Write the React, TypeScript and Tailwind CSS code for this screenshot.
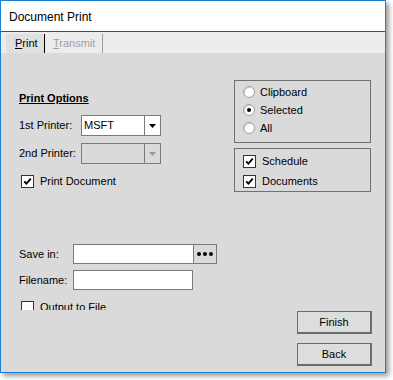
import React from "react";

const font = { fontFamily: '"Liberation Sans", Arial, sans-serif' };

function CheckBox({ checked, label }: { checked?: boolean; label: string }) {
  return (
    <div className="flex items-center h-[13px] gap-[6px]">
      <div className="w-[13px] h-[13px] shrink-0 border border-[#333] bg-white flex items-center justify-center">
        {checked && (
          <svg width="9" height="9" viewBox="0 0 9 9">
            <path d="M1.2 4.3 L3.4 6.6 L7.8 1.6" fill="none" stroke="#000" strokeWidth="1.9" />
          </svg>
        )}
      </div>
      <span className="leading-[13px]">{label}</span>
    </div>
  );
}

function Radio({ selected, label }: { selected?: boolean; label: string }) {
  return (
    <div className="flex items-center h-[18px] gap-[5px]">
      <div className="w-[12px] h-[12px] rounded-full border border-[#a0a0a0] bg-white flex items-center justify-center shadow-[inset_1px_1px_0_#d0d0d0]">
        {selected && <div className="w-[4px] h-[4px] rounded-full bg-black" />}
      </div>
      <span>{label}</span>
    </div>
  );
}

function Combo({ value, disabled }: { value?: string; disabled?: boolean }) {
  return (
    <div
      className={`flex h-[21px] w-[80px] border border-[#7a7a7a] ${disabled ? "bg-[#dadada]" : "bg-white"}`}
    >
      <div className="flex-1 pl-[2px] flex items-center">{value}</div>
      <div className="w-[16px] border-l border-[#7a7a7a] flex items-center justify-center">
        <svg width="7" height="4" viewBox="0 0 7 4">
          <path d="M0 0 H7 L3.5 4 Z" fill={disabled ? "#9a9a9a" : "#000"} />
        </svg>
      </div>
    </div>
  );
}

function Button({ label }: { label: string }) {
  return (
    <div className="w-[75px] h-[23px] border-t border-l border-r-2 border-b-2 border-[#6c6c6c] bg-[#dddddd] flex items-center justify-center">
      {label}
    </div>
  );
}

export default function App() {
  return (
    <div className="w-[393px] h-[380px] bg-white text-[11px] text-black" style={font}>
      <div className="w-[386px] h-[373px] border border-[#1a7fd4] flex flex-col shadow-[3px_3px_5px_rgba(0,0,0,0.4)]">
        {/* title bar */}
        <div className="h-[30px] bg-white flex items-center pl-[8px] text-[12px] pt-[2px]">Document Print</div>
        <div className="h-px bg-[#4d4d4d]" />

        {/* tabs */}
        <div className="h-[21px] bg-[#ececec] flex items-end pl-[5px]">
          <div className="h-[19px] w-[38px] bg-[#e0e0e0] flex items-center pl-[9px]">
            <span>
              <span className="underline">P</span>rint
            </span>
          </div>
          <div className="w-px h-[19px] bg-black" />
          <div className="h-[19px] flex items-center pl-[8px] text-[#a0a0a0]">
            <span>
              <span className="underline">T</span>ransmit
            </span>
          </div>
          <div className="w-px h-[19px] bg-[#a0a0a0] ml-[7px]" />
        </div>

        {/* body */}
        <div className="flex-1 bg-[#dadada] flex flex-col">
          <div className="flex pt-[27px]">
            <div className="ml-[18px] w-[215px] pt-[12px]">
              <div className="h-[13px] leading-[13px] font-bold underline underline-offset-[1px]">Print Options</div>
              <div className="flex items-center mt-[10px]">
                <span className="w-[62px]">1st Printer:</span>
                <Combo value="MSFT" />
              </div>
              <div className="flex items-center mt-[7px]">
                <span className="w-[62px]">2nd Printer:</span>
                <Combo disabled />
              </div>
              <div className="mt-[11px] pl-[2px]">
                <CheckBox checked label="Print Document" />
              </div>
            </div>

            <div className="w-[137px]">
              <div className="h-[63px] border border-[#707070] pl-[8px] pt-[2px]">
                <Radio label="Clipboard" />
                <Radio selected label="Selected" />
                <Radio label="All" />
              </div>
              <div className="h-[44px] mt-[5px] border border-[#707070] pl-[8px] pt-[2px]">
                <div className="h-[20px] flex items-center">
                  <CheckBox checked label="Schedule" />
                </div>
                <div className="h-[20px] flex items-center">
                  <CheckBox checked label="Documents" />
                </div>
              </div>
            </div>
          </div>

          <div className="flex items-start mt-[52px]">
            <div className="ml-[18px] h-[66px] overflow-hidden">
              <div className="flex items-center h-[20px]">
                <span className="w-[54px]">Save in:</span>
                <div className="w-[121px] h-[20px] border border-[#7a7a7a] bg-white" />
                <div className="w-[23px] h-[20px] border border-l-0 border-[#7a7a7a] bg-[#dadada] flex items-center justify-center gap-[2px]">
                  <div className="w-[4px] h-[4px] rounded-full bg-black" />
                  <div className="w-[4px] h-[4px] rounded-full bg-black" />
                  <div className="w-[4px] h-[4px] rounded-full bg-black" />
                </div>
              </div>
              <div className="flex items-center h-[20px] mt-[6px]">
                <span className="w-[54px]">Filename:</span>
                <div className="w-[120px] h-[20px] border border-[#7a7a7a] bg-white" />
              </div>
              <div className="mt-[11px] pl-[2px]">
                <CheckBox label="Output to File" />
              </div>
            </div>

            <div className="ml-auto mr-[13px] mt-[67px] flex flex-col gap-[9px]">
              <Button label="Finish" />
              <Button label="Back" />
            </div>
          </div>
        </div>
      </div>
    </div>
  );
}
